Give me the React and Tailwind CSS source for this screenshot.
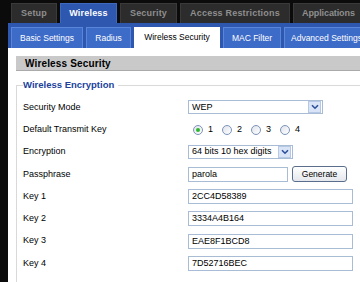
import React from 'react';

const topTabs = [
  { label: 'Setup', w: 'w-[46px] justify-center tracking-[0.2px]' },
  { label: 'Wireless', w: 'w-[57px] justify-center tracking-[0.2px]', active: true },
  { label: 'Security', w: 'w-[57px] justify-center tracking-[0.2px]' },
  { label: 'Access Restrictions', w: 'w-[110px] justify-center tracking-[0.2px]' },
  { label: 'Applications', w: 'w-[80px] justify-start pl-[8px] tracking-[-0.1px]' },
];

const subTabs = [
  { label: 'Basic Settings', w: 'w-[72px] justify-center' },
  { label: 'Radius', w: 'w-[45px] justify-center' },
  { label: 'Wireless Security', w: 'w-[86px] justify-center', active: true },
  { label: 'MAC Filter', w: 'w-[58px] justify-center' },
  { label: 'Advanced Settings', w: 'w-[90px] justify-start pl-[6px]' },
];

const keys = [
  ['Key 1', '2CC4D58389'],
  ['Key 2', '3334A4B164'],
  ['Key 3', 'EAE8F1BCD8'],
  ['Key 4', '7D52716BEC'],
];

const Chevron = () => (
  <svg width="8" height="6" viewBox="0 0 8 6">
    <path d="M1 1.2 L4 4.2 L7 1.2" fill="none" stroke="#2b4f9a" strokeWidth="1.6" />
  </svg>
);

const Select = ({ value, w }) => (
  <div className={`flex items-center h-[14px] ${w} border border-[#a9bcd6] bg-white`}>
    <span className="flex-1 pl-[3px] text-[9px] leading-none text-black">{value}</span>
    <span className="flex items-center justify-center w-[13px] h-[12px] mr-[1px] bg-[#d9e4f6] border border-[#b7c8e4]">
      <Chevron />
    </span>
  </div>
);

const TextBox = ({ value, w }) => (
  <div className={`flex items-center h-[15px] ${w} border border-[#a9bcd6] bg-white pl-[3px] text-[9px] leading-none text-black`}>
    {value}
  </div>
);

const Radio = ({ checked }) => (
  <span className="flex items-center justify-center w-[10px] h-[10px] rounded-full border border-[#7d93b8] bg-gradient-to-br from-[#dfe3ea] to-white">
    {checked && <span className="w-[4px] h-[4px] rounded-full bg-[#2fb52f]" />}
  </span>
);

const Row = ({ label, children }) => (
  <div className="flex items-center h-[22.3px]">
    <span className="w-[165px] text-[9px] text-black">{label}</span>
    {children}
  </div>
);

export default function App() {
  return (
    <div className="w-[360px] h-[282px] overflow-hidden bg-[#0b0b0b] font-['Liberation_Sans',Arial,sans-serif]">
      <div className="flex items-stretch gap-[3px] h-[23px] pt-[3px] pl-[11px]">
        {topTabs.map((t) => (
          <div
            key={t.label}
            className={`${t.w} shrink-0 flex items-center whitespace-nowrap text-[9px] font-bold ${
              t.active
                ? 'bg-[#2e57b0] text-white border border-b-0 border-[#3f68c0]'
                : 'bg-[#2c2c2c] text-[#8f8f8f] border border-[#3a3a3a] border-b-0'
            }`}
          >
            {t.label}
          </div>
        ))}
      </div>

      <div className="ml-[8px]">
        <div className="flex items-end gap-[3px] h-[25px] pl-[3px] bg-[#2e57b0]">
          {subTabs.map((t) => (
            <div
              key={t.label}
              className={`${t.w} shrink-0 h-[21px] flex items-center text-[8.5px] whitespace-nowrap ${
                t.active
                  ? 'bg-white text-black'
                  : 'bg-[#3d6bc8] text-white border border-b-0 border-[#5a86d9]'
              }`}
            >
              {t.label}
            </div>
          ))}
        </div>

        <div className="bg-white h-[234px] pt-[8px] pl-[8px]">
          <div className="h-[15px] flex items-center pl-[9px] bg-[#c9c9c9] border-b border-[#aaaaaa] text-[10px] font-bold tracking-[0.15px] text-black">
            Wireless Security
          </div>

          <fieldset className="mt-[7px] h-[210px] w-[360px] border border-r-0 border-[#d9d9d9] px-[6px]">
            <legend className="pr-[4px] text-[9.5px] font-bold text-[#213f9c]">Wireless Encryption</legend>
            <div className="pt-[4px]">
              <Row label="Security Mode">
                <Select value="WEP" w="w-[135px]" />
              </Row>
              <Row label="Default Transmit Key">
                <div className="flex items-center pl-[5px]">
                  {[1, 2, 3, 4].map((n) => (
                    <span key={n} className="flex items-center mr-[9px]">
                      <Radio checked={n === 1} />
                      <span className="ml-[5px] text-[9px] text-black">{n}</span>
                    </span>
                  ))}
                </div>
              </Row>
              <Row label="Encryption">
                <Select value="64 bits 10 hex digits" w="w-[105px]" />
              </Row>
              <Row label="Passphrase">
                <TextBox value="parola" w="w-[100px]" />
                <button className="ml-[4px] h-[16px] w-[55px] rounded-[3px] border border-[#5a6d8c] bg-gradient-to-b from-white to-[#e4e7ec] text-[8.5px] text-black">
                  Generate
                </button>
              </Row>
              {keys.map(([k, v]) => (
                <Row key={k} label={k}>
                  <TextBox value={v} w="w-[165px]" />
                </Row>
              ))}
            </div>
          </fieldset>
        </div>
      </div>
    </div>
  );
}
